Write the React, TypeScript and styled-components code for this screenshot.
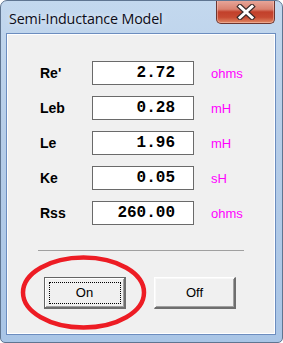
import React from "react";
import styled, { createGlobalStyle } from "styled-components";

const GlobalStyle = createGlobalStyle`
  html, body {
    margin: 0;
    padding: 0;
    background: #ffffff;
  }
  * {
    box-sizing: border-box;
  }
`;

const Window = styled.div`
  width: 283px;
  height: 343px;
  display: flex;
  flex-direction: column;
  border: 1px solid #5f7591;
  border-radius: 7px 7px 5px 5px;
  background: linear-gradient(180deg, #c3d8ee 0%, #b6cde8 40%, #a9c5e6 100%);
  padding: 0 6px 7px 5px;
  overflow: hidden;
`;

const TitleBar = styled.div`
  height: 32px;
  display: flex;
  align-items: flex-start;
  justify-content: space-between;
  flex-shrink: 0;
`;

const Title = styled.div`
  font-family: "Open Sans", "Liberation Sans", sans-serif;
  font-size: 14.3px;
  color: #0c0c18;
  margin: 8px 0 0 3px;
  letter-spacing: -0.15px;
  text-shadow: 0 0 6px rgba(255, 255, 255, 0.9);
`;

const CloseButton = styled.div`
  width: 59px;
  height: 24px;
  margin-top: -1px;
  margin-right: 1px;
  display: flex;
  align-items: center;
  justify-content: center;
  border: 1px solid #6d3630;
  border-top: none;
  border-radius: 0 0 5px 5px;
  background: linear-gradient(
    180deg,
    #e8a99d 0%,
    #d98270 40%,
    #c2402b 52%,
    #c74a32 75%,
    #e08a66 100%
  );
  box-shadow: inset 0 0 0 1px rgba(255, 210, 200, 0.45);
`;

const Client = styled.div`
  flex: 1;
  border: 1px solid #6c8dbf;
  box-shadow: inset 0 0 0 1px #ffffff;
  background: #f0f0f0;
  padding: 27px 0 0 33px;
  display: flex;
  flex-direction: column;
`;

const Fields = styled.div`
  display: grid;
  grid-template-columns: 52px 102px auto;
  row-gap: 11px;
  align-items: center;
`;

const Label = styled.div`
  font-family: "Liberation Sans", Arial, sans-serif;
  font-weight: bold;
  font-size: 14px;
  color: #000000;
`;

const ValueBox = styled.div`
  height: 24px;
  border: 1px solid #6a6a6a;
  background: #ffffff;
  font-family: "Liberation Mono", "DejaVu Sans Mono", monospace;
  font-weight: bold;
  font-size: 16px;
  line-height: 22px;
  text-align: right;
  padding-right: 18px;
  color: #000000;
`;

const Unit = styled.div`
  font-family: "Liberation Sans", Arial, sans-serif;
  font-size: 13px;
  color: #ff00ff;
  margin-left: 17px;
`;

const Separator = styled.div`
  width: 206px;
  height: 1px;
  margin: 25px 0 0 -2px;
  background: #a0a0a0;
`;

const ButtonRow = styled.div`
  display: flex;
  gap: 28px;
  margin: 26px 0 0 4px;
`;

const ButtonSlot = styled.div`
  position: relative;
`;

const Button = styled.div<{ $default?: boolean }>`
  width: 82px;
  height: 32px;
  display: flex;
  align-items: center;
  justify-content: center;
  font-family: "Liberation Sans", Arial, sans-serif;
  font-size: 13px;
  color: #000000;
  background: #f0f0f0;
  border-style: solid;
  border-width: 1px 2px 2px 1px;
  border-color: ${(p) =>
    p.$default
      ? "#646464 #6e6e6e #6e6e6e #646464"
      : "#ffffff #6e6e6e #6e6e6e #ffffff"};
  box-shadow: ${(p) =>
    p.$default
      ? "inset 1px 1px 0 #ffffff, inset -1px -1px 0 #a0a0a0"
      : "inset 1px 1px 0 #f8f8f8, inset -1px -1px 0 #a0a0a0"};
`;

const FocusRect = styled.div`
  width: 72px;
  height: 22px;
  border: 1px dotted #000000;
  display: flex;
  align-items: center;
  justify-content: center;
`;

const Annotation = styled.svg`
  position: absolute;
  left: -24px;
  top: -22px;
  pointer-events: none;
  overflow: visible;
`;

const fields = [
  { label: "Re'", value: "2.72", unit: "ohms" },
  { label: "Leb", value: "0.28", unit: "mH" },
  { label: "Le", value: "1.96", unit: "mH" },
  { label: "Ke", value: "0.05", unit: "sH" },
  { label: "Rss", value: "260.00", unit: "ohms" },
];

const CloseGlyph = () => (
  <svg width="20" height="16" viewBox="0 0 20 16">
    <path
      d="M4 2.5 L16 13.5 M16 2.5 L4 13.5"
      stroke="#3a2a2a"
      strokeWidth="5.2"
      strokeLinecap="square"
    />
    <path
      d="M4 2.5 L16 13.5 M16 2.5 L4 13.5"
      stroke="#ffffff"
      strokeWidth="3"
      strokeLinecap="square"
    />
  </svg>
);

export default function App() {
  return (
    <>
      <GlobalStyle />
      <Window>
        <TitleBar>
          <Title>Semi-Inductance Model</Title>
          <CloseButton>
            <CloseGlyph />
          </CloseButton>
        </TitleBar>
        <Client>
          <Fields>
            {fields.map((f) => (
              <React.Fragment key={f.label}>
                <Label>{f.label}</Label>
                <ValueBox>{f.value}</ValueBox>
                <Unit>{f.unit}</Unit>
              </React.Fragment>
            ))}
          </Fields>
          <Separator />
          <ButtonRow>
            <ButtonSlot>
              <Button $default>
                <FocusRect>On</FocusRect>
              </Button>
              <Annotation width="128" height="76" viewBox="0 0 128 76">
                <ellipse
                  cx="63.5"
                  cy="37.5"
                  rx="60.5"
                  ry="35"
                  fill="none"
                  stroke="#ed1c24"
                  strokeWidth="4.5"
                />
              </Annotation>
            </ButtonSlot>
            <ButtonSlot>
              <Button>Off</Button>
            </ButtonSlot>
          </ButtonRow>
        </Client>
      </Window>
    </>
  );
}
